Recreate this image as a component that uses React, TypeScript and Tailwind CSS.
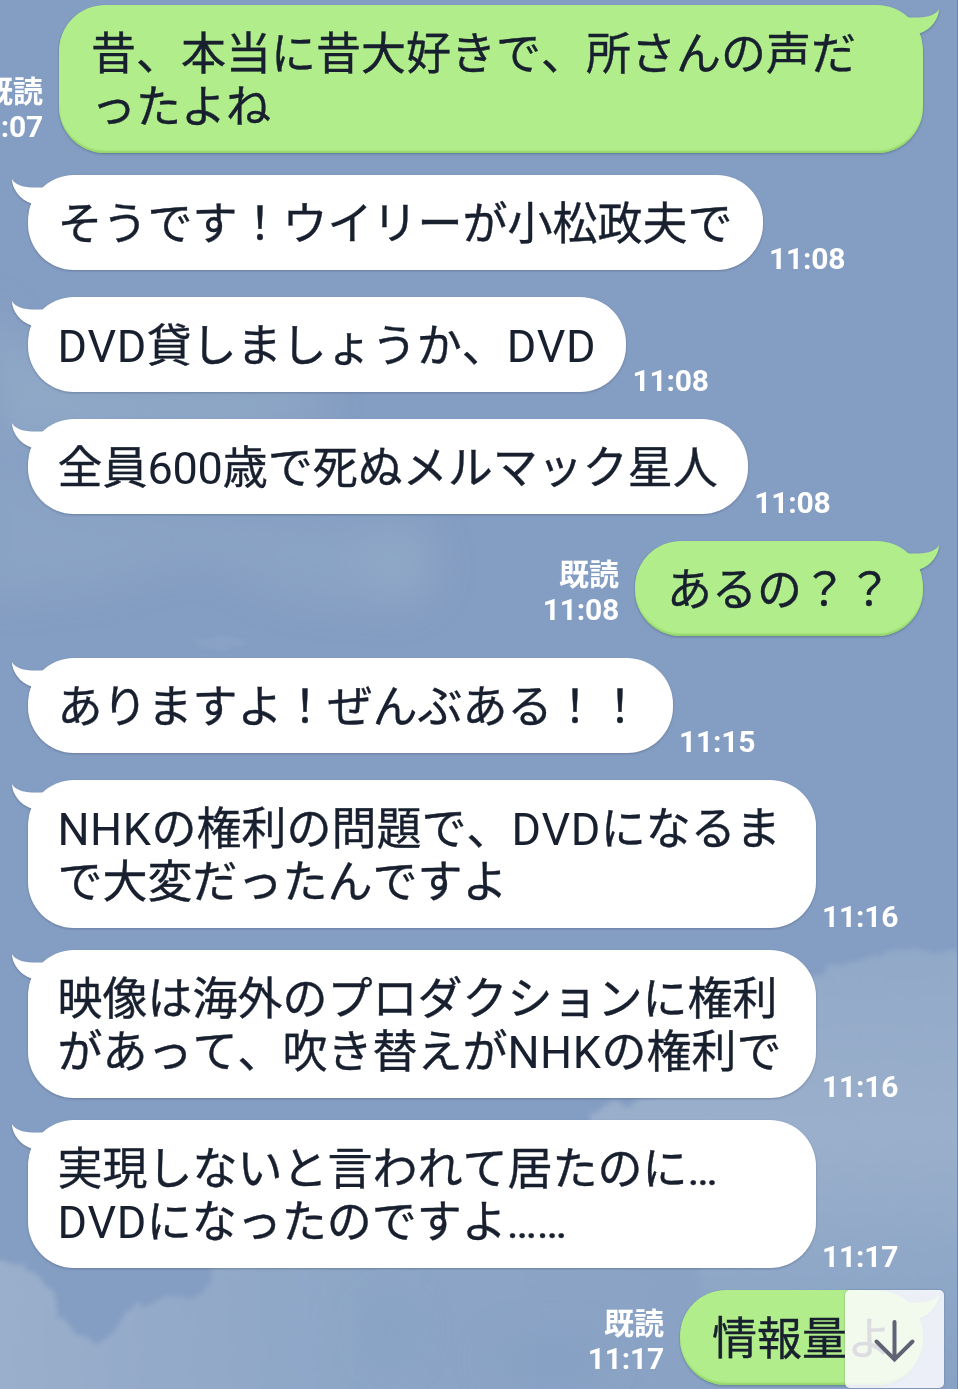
import clsx from "clsx";

type Message = {
  id: number;
  mine: boolean;
  lines: string[];
  time: string;
};

const messages: Message[] = [
  { id: 1, mine: true, lines: ["昔、本当に昔大好きで、所さんの声だ", "ったよね"], time: "11:07" },
  { id: 2, mine: false, lines: ["そうです！ウイリーが小松政夫で"], time: "11:08" },
  { id: 3, mine: false, lines: ["DVD貸しましょうか、DVD"], time: "11:08" },
  { id: 4, mine: false, lines: ["全員600歳で死ぬメルマック星人"], time: "11:08" },
  { id: 5, mine: true, lines: ["あるの？？"], time: "11:08" },
  { id: 6, mine: false, lines: ["ありますよ！ぜんぶある！！"], time: "11:15" },
  { id: 7, mine: false, lines: ["NHKの権利の問題で、DVDになるま", "で大変だったんですよ"], time: "11:16" },
  { id: 8, mine: false, lines: ["映像は海外のプロダクションに権利", "があって、吹き替えがNHKの権利で"], time: "11:16" },
  { id: 9, mine: false, lines: ["実現しないと言われて居たのに…", "DVDになったのですよ……"], time: "11:17" },
  { id: 10, mine: true, lines: ["情報量よ"], time: "11:17" },
];

function Sky() {
  return (
    <svg className="absolute inset-0" width="958" height="1389" viewBox="0 0 958 1389" aria-hidden="true">
      <defs>
        <filter id="soft" x="-30%" y="-30%" width="160%" height="160%">
          <feGaussianBlur stdDeviation="18" />
        </filter>
        <filter id="edge" x="-10%" y="-10%" width="120%" height="120%">
          <feTurbulence type="fractalNoise" baseFrequency="0.05" numOctaves="3" seed="4" result="n" />
          <feDisplacementMap in="SourceGraphic" in2="n" scale="18" xChannelSelector="R" yChannelSelector="G" />
          <feGaussianBlur stdDeviation="2.5" />
        </filter>
        <linearGradient id="right" x1="0" y1="0" x2="0" y2="1">
          <stop offset="0" stopColor="#91a9c8" />
          <stop offset="0.4" stopColor="#9aafcb" />
          <stop offset="0.75" stopColor="#8da6c7" />
          <stop offset="1" stopColor="#87a1c4" />
        </linearGradient>
        <linearGradient id="bottom" x1="0" y1="0" x2="1" y2="0">
          <stop offset="0" stopColor="#9bb0cb" />
          <stop offset="0.25" stopColor="#94aac9" />
          <stop offset="0.55" stopColor="#8da6c7" />
          <stop offset="1" stopColor="#8aa3c5" />
        </linearGradient>
      </defs>
      <g filter="url(#soft)" fill="#9cb3cc">
        <path d="M-20 300 L40 360 L130 385 L320 385 L330 410 L250 430 L0 440Z" opacity="0.5" />
        <path d="M-20 430 L60 500 L220 515 L425 525 L440 580 L400 610 L290 600 L200 560 L90 590 L-20 600Z" opacity="0.3" />
        <path d="M370 520 L425 520 L440 570 L410 610 L350 570Z" opacity="0.2" />
      </g>
      <ellipse cx="220" cy="643" rx="24" ry="7" fill="#93abca" opacity="0.4" filter="url(#edge)" />
      <path
        d="M590 1110 L680 1090 L800 985 L820 972 L860 960 L890 954 L925 950 L990 956 L990 1410 L590 1410Z"
        fill="url(#right)"
        filter="url(#edge)"
      />
      <path
        d="M-30 1255 L25 1265 L50 1285 L58 1315 L80 1335 L98 1345 L115 1325 L145 1300 L175 1298 L195 1300 L215 1270 L250 1250 L600 1220 L700 1240 L700 1420 L-30 1420Z"
        fill="url(#bottom)"
        filter="url(#edge)"
      />
      <g filter="url(#soft)" fill="#7f9bc1">
        <ellipse cx="390" cy="1330" rx="25" ry="35" opacity="0.3" />
        <ellipse cx="550" cy="1360" rx="60" ry="25" opacity="0.4" />
      </g>
      <path d="M957.5 0V1389" stroke="#6d87ad" />
    </svg>
  );
}

function Tail({ mine }: { mine: boolean }) {
  return (
    <svg
      className={clsx("absolute top-0", mine ? "-right-[17px] -scale-x-100" : "-left-[17px]")}
      width="66"
      height="50"
      viewBox="0 0 66 50"
      aria-hidden="true"
    >
      <path
        d="M1 4 C4 9.5 12 12.4 21 12.4 H32 L44 40 H18 C18 36 19 31 20.5 28.5 C9 24.5 1 14 1 4Z"
        fill={mine ? "#b1ed8a" : "#ffffff"}
      />
    </svg>
  );
}

// Latin runs are a touch lighter and looser than the kana around them
function Line({ text }: { text: string }) {
  return (
    <p>
      {text.split(/([A-Z]+|\d+)/).map((part, i) =>
        /^[A-Z]/.test(part) ? (
          <span key={i} className="tracking-[0.5px] [-webkit-text-stroke-width:0]">{part}</span>
        ) : /^\d/.test(part) ? (
          <span key={i} className="tracking-[-0.25px] [-webkit-text-stroke-width:0]">{part}</span>
        ) : (
          part
        ),
      )}
    </p>
  );
}

function Bubble({ mine, lines }: Pick<Message, "mine" | "lines">) {
  return (
    <div
      className={clsx(
        "relative shrink-0",
        mine
          ? "drop-shadow-[0_1px_1px_rgba(60,90,110,0.5)]"
          : "drop-shadow-[0_1px_1px_rgba(70,85,115,0.45)]",
      )}
    >
      <div
        className={clsx(
          "rounded-[46px] pt-[23px] pb-[19px] text-[45px] leading-[53px] whitespace-nowrap text-[#18202f]",
          "[-webkit-text-stroke:0.4px_#18202f] [font-kerning:none]",
          mine
            ? "bg-[#b1ed8a] pr-[31px] pl-[32px] shadow-[inset_0_-3px_2px_-1px_#92d468]"
            : "bg-white pr-[30.5px] pl-[29.5px]",
          lines.length > 1 && (mine ? "w-[864px]" : "w-[788px]"),
        )}
      >
        {lines.map((line) => (
          <Line key={line} text={line} />
        ))}
      </div>
      <Tail mine={mine} />
    </div>
  );
}

function MessageRow({ mine, lines, time }: Message) {
  if (mine) {
    return (
      <div className="flex items-end justify-end pr-[35px]">
        <div className="mr-4 mb-[8px] shrink-0 text-right text-[30px] leading-[36px] font-bold text-white">
          <div className="leading-[34px]">既読</div>
          <div className="tracking-[-0.2px]">{time}</div>
        </div>
        <Bubble mine lines={lines} />
      </div>
    );
  }
  return (
    <div className={clsx("flex items-end pl-[28px]", lines.length === 1 && "mb-[5px]")}>
      <Bubble mine={false} lines={lines} />
      <span className="-mb-[7px] ml-[6px] text-[30px] leading-[36px] font-bold tracking-[-0.2px] text-white">
        {time}
      </span>
    </div>
  );
}

export default function App() {
  return (
    <main className="relative h-[1389px] w-[958px] overflow-hidden bg-[#849dc2] font-[Roboto,'Noto_Sans_CJK_JP',sans-serif]">
      <Sky />
      <div className="relative flex flex-col gap-[22px] pt-[5px]">
        {messages.map((m) => (
          <MessageRow key={m.id} {...m} />
        ))}
      </div>
      <button
        aria-label="最新のメッセージへ"
        className="absolute right-[14px] bottom-[1px] flex h-[98px] w-[99px] items-center justify-center rounded-[5px] bg-[#fdfcff]/86 shadow-[0_0_2px_rgba(70,85,115,0.5)]"
      >
        <svg
          className="mt-1"
          width="44"
          height="44"
          viewBox="0 0 44 44"
          fill="none"
          stroke="#5f6374"
          strokeWidth="4"
          strokeLinecap="round"
          aria-hidden="true"
        >
          <path d="M21.5 3V40M3.5 22.5L21.5 40.5L39.5 22.5" />
        </svg>
      </button>
    </main>
  );
}
